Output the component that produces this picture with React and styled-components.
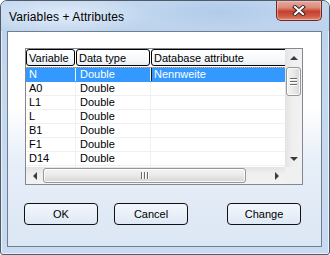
import React from "react";
import styled, { createGlobalStyle } from "styled-components";

const GlobalStyle = createGlobalStyle`
  html, body {
    margin: 0;
    padding: 0;
    background: #ffffff;
  }
  body {
    font-family: "Liberation Sans", Arial, sans-serif;
  }
`;

const Window = styled.div`
  width: 330px;
  height: 255px;
  box-sizing: border-box;
  display: flex;
  flex-direction: column;
  border: 1px solid #4f5b69;
  border-radius: 7px 7px 3px 3px;
  background: linear-gradient(180deg, #bcd2ec 0%, #c4d8ef 35%, #c9dbf0 100%);
  box-shadow: inset 0 0 0 1px rgba(255, 255, 255, 0.6);
  overflow: hidden;
`;

const TitleBar = styled.div`
  height: 30px;
  flex: none;
  display: flex;
  align-items: flex-start;
  justify-content: space-between;
  background:
    radial-gradient(ellipse 90px 20px at 60px 14px, rgba(228, 238, 250, 0.9), rgba(228, 238, 250, 0) 100%),
    radial-gradient(ellipse 80px 18px at 220px 10px, rgba(170, 198, 232, 0.7), rgba(170, 198, 232, 0) 100%),
    linear-gradient(180deg, #c2d7ef 0%, #bdd3ed 100%);
`;

const Title = styled.span`
  font-size: 12px;
  color: #000000;
  padding: 9px 0 0 8px;
  letter-spacing: 0.1px;
`;

const CloseButton = styled.div`
  width: 46px;
  height: 20px;
  margin-right: 7px;
  box-sizing: border-box;
  border: 1px solid #6b2a22;
  border-top: none;
  border-radius: 0 0 5px 5px;
  background: linear-gradient(180deg, #e9a99c 0%, #dc8a79 35%, #c4402f 55%, #cf5a45 80%, #e08a70 100%);
  box-shadow: inset 0 0 0 1px rgba(255, 210, 200, 0.5);
  display: flex;
  align-items: center;
  justify-content: center;
`;

const Client = styled.div`
  flex: 1;
  margin: 0 7px 7px 6px;
  border: 1px solid #6f7e90;
  background: linear-gradient(180deg, #ffffff 0%, #ffffff 35%, #e6eef8 62%, #dce7f4 100%);
  padding: 16px 0 0 16px;
  display: flex;
  flex-direction: column;
`;

const ListView = styled.div`
  width: 278px;
  height: 137px;
  margin-left: 1px;
  box-sizing: border-box;
  border: 1px solid #828790;
  background: #ffffff;
  display: grid;
  grid-template-columns: 1fr 17px;
  grid-template-rows: 1fr 17px;
  font-size: 11px;
  color: #000000;
`;

const Pane = styled.div`
  overflow: hidden;
  display: flex;
  flex-direction: column;
`;

const HeaderRow = styled.div`
  height: 19px;
  flex: none;
  display: flex;
`;

const HeaderCell = styled.div`
  width: ${(p) => p.$w}px;
  flex: none;
  height: 17px;
  margin-right: ${(p) => p.$gap}px;
  box-sizing: border-box;
  border: 1px solid #000000;
  border-radius: 3px;
  background: linear-gradient(180deg, #ffffff 0%, #f7f9fb 60%, #e9eef4 100%);
  padding: 1px 0 0 2px;
  line-height: 14px;
  white-space: nowrap;
  overflow: hidden;
`;

const Row = styled.div`
  height: 14px;
  flex: none;
  display: flex;
  box-sizing: border-box;
  background: ${(p) => (p.$selected ? "#3399ff" : "transparent")};
  color: ${(p) => (p.$selected ? "#ffffff" : "#000000")};
  border-bottom: 1px solid ${(p) => (p.$selected ? "#3399ff" : "#f0f0f0")};
  border-top: ${(p) => (p.$selected ? "1px dotted #f7a04a" : "none")};
  margin-top: ${(p) => (p.$selected ? "-1px" : "0")};
  height: ${(p) => (p.$selected ? "15px" : "14px")};
`;

const Cell = styled.div`
  width: ${(p) => (p.$w ? `${p.$w}px` : "auto")};
  flex: ${(p) => (p.$w ? "none" : "1")};
  box-sizing: border-box;
  padding-left: ${(p) => p.$pad}px;
  line-height: 13px;
  white-space: nowrap;
  border-right: ${(p) => (p.$w ? "1px solid #f0f0f0" : "none")};
  border-left: ${(p) => (p.$mark ? "1px solid #1a1a1a" : "none")};
`;

const VScroll = styled.div`
  display: flex;
  flex-direction: column;
  background: linear-gradient(90deg, #e3e3e3 0%, #efefef 40%, #f2f2f2 100%);
`;

const HScroll = styled.div`
  display: flex;
  background: linear-gradient(180deg, #e3e3e3 0%, #efefef 40%, #f2f2f2 100%);
`;

const Corner = styled.div`
  background: #f0f0f0;
`;

const ArrowBox = styled.div`
  width: 17px;
  height: 17px;
  flex: none;
  display: flex;
  align-items: center;
  justify-content: center;
`;

const Arrow = styled.div`
  width: 0;
  height: 0;
  border-style: solid;
  border-color: transparent;
  ${(p) =>
    p.$dir === "up" &&
    "border-width: 0 4px 4px 4px; border-bottom-color: #3c3c3c;"}
  ${(p) =>
    p.$dir === "down" &&
    "border-width: 4px 4px 0 4px; border-top-color: #3c3c3c;"}
  ${(p) =>
    p.$dir === "left" &&
    "border-width: 4px 4px 4px 0; border-right-color: #3c3c3c;"}
  ${(p) =>
    p.$dir === "right" &&
    "border-width: 4px 0 4px 4px; border-left-color: #3c3c3c;"}
`;

const Track = styled.div`
  flex: 1;
  display: flex;
  flex-direction: ${(p) => (p.$vertical ? "column" : "row")};
`;

const Thumb = styled.div`
  box-sizing: border-box;
  border: 1px solid #979797;
  border-radius: 3px;
  display: flex;
  align-items: center;
  justify-content: center;
  gap: 2px;
  flex-direction: ${(p) => (p.$vertical ? "column" : "row")};
  ${(p) =>
    p.$vertical
      ? `width: 15px; height: 29px; margin: 1px 0 0 1px;
         background: linear-gradient(90deg, #f4f4f4 0%, #e9e9e9 50%, #d6d6d6 100%);`
      : `width: 203px; height: 15px; margin: 1px 0 0 0;
         background: linear-gradient(180deg, #f4f4f4 0%, #e9e9e9 50%, #d6d6d6 100%);`}
  box-shadow: inset 0 0 0 1px rgba(255, 255, 255, 0.8);
`;

const Grip = styled.div`
  flex: none;
  background: #6a6a6a;
  ${(p) =>
    p.$vertical
      ? "width: 7px; height: 1px; box-shadow: 0 1px 0 #ffffff;"
      : "width: 1px; height: 7px; box-shadow: 1px 0 0 #ffffff;"}
`;

const ButtonRow = styled.div`
  display: flex;
  margin-top: 18px;
`;

const Button = styled.div`
  width: 74px;
  height: 22px;
  box-sizing: border-box;
  margin-left: ${(p) => p.$offset}px;
  border: 1px solid #111111;
  border-radius: 4px;
  background: linear-gradient(180deg, #f3f7fc 0%, #e9f0f8 50%, #dfe8f4 100%);
  display: flex;
  align-items: center;
  justify-content: center;
  font-size: 11px;
  color: #000000;
`;

const columns = [
  { title: "Variable", w: 50, gap: 1 },
  { title: "Data type", w: 75, gap: 1 },
  { title: "Database attribute", w: 140, gap: 0 },
];

const rows = [
  ["N", "Double", "Nennweite"],
  ["A0", "Double", ""],
  ["L1", "Double", ""],
  ["L", "Double", ""],
  ["B1", "Double", ""],
  ["F1", "Double", ""],
  ["D14", "Double", ""],
  ["", "", ""],
];

function CloseGlyph() {
  return (
    <svg width="14" height="11" viewBox="0 0 14 11">
      <path d="M3 2 L11 9 M11 2 L3 9" stroke="#3a2a2a" strokeWidth="4" strokeLinecap="square" />
      <path d="M3 2 L11 9 M11 2 L3 9" stroke="#ffffff" strokeWidth="2" strokeLinecap="square" />
    </svg>
  );
}

export default function App() {
  return (
    <>
      <GlobalStyle />
      <Window>
        <TitleBar>
          <Title>Variables + Attributes</Title>
          <CloseButton>
            <CloseGlyph />
          </CloseButton>
        </TitleBar>
        <Client>
          <ListView>
            <Pane>
              <HeaderRow>
                {columns.map((c) => (
                  <HeaderCell key={c.title} $w={c.w - c.gap} $gap={c.gap}>
                    {c.title}
                  </HeaderCell>
                ))}
              </HeaderRow>
              {rows.map((r, i) => (
                <Row key={i} $selected={i === 0}>
                  <Cell $w={50} $pad={3}>{r[0]}</Cell>
                  <Cell $w={75} $pad={4}>{r[1]}</Cell>
                  <Cell $pad={2} $mark={i === 0}>{r[2]}</Cell>
                </Row>
              ))}
            </Pane>
            <VScroll>
              <ArrowBox>
                <Arrow $dir="up" />
              </ArrowBox>
              <Track $vertical>
                <Thumb $vertical>
                  <Grip $vertical />
                  <Grip $vertical />
                  <Grip $vertical />
                </Thumb>
              </Track>
              <ArrowBox>
                <Arrow $dir="down" />
              </ArrowBox>
            </VScroll>
            <HScroll>
              <ArrowBox>
                <Arrow $dir="left" />
              </ArrowBox>
              <Track>
                <Thumb>
                  <Grip />
                  <Grip />
                  <Grip />
                </Thumb>
              </Track>
              <ArrowBox>
                <Arrow $dir="right" />
              </ArrowBox>
            </HScroll>
            <Corner />
          </ListView>
          <ButtonRow>
            <Button $offset={0}>OK</Button>
            <Button $offset={16}>Cancel</Button>
            <Button $offset={39}>Change</Button>
          </ButtonRow>
        </Client>
      </Window>
    </>
  );
}
